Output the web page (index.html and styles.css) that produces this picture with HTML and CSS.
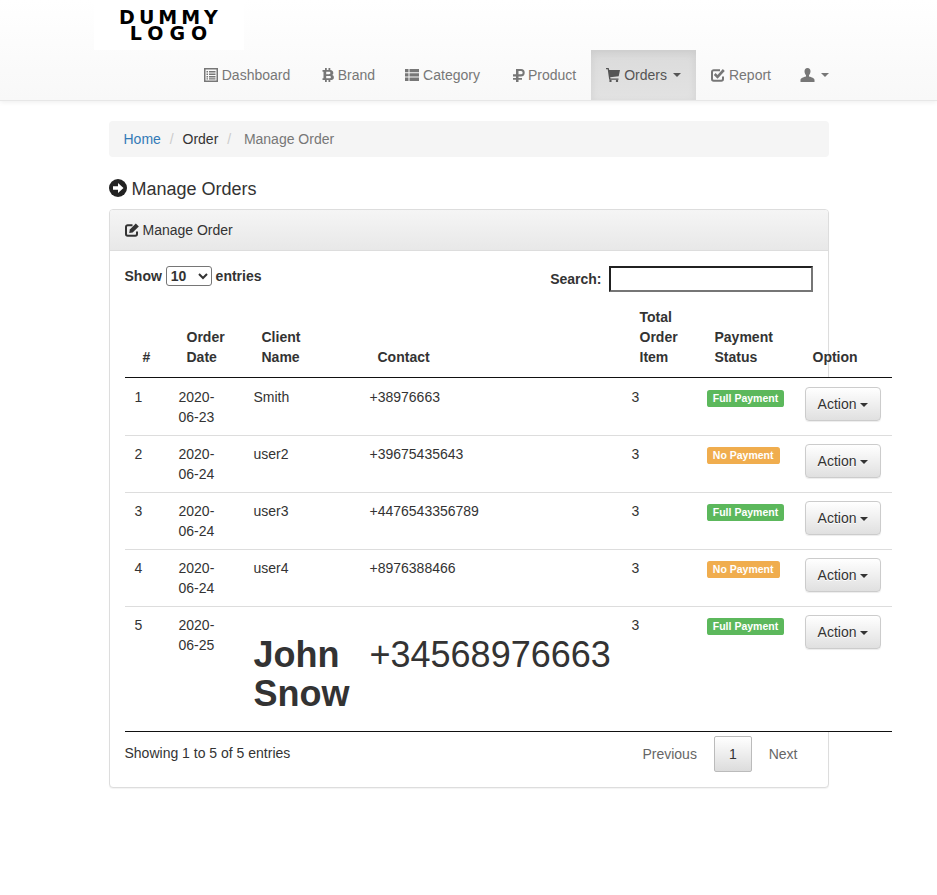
FILE: index.html
```html
<!DOCTYPE html>
<html lang="en">
<head>
<meta charset="utf-8">
<title>Manage Orders</title>
<link rel="stylesheet" href="styles.css">
</head>
<body>
<header class="navbar">
  <div class="nav-inner">
    <div class="logo"><span class="logo-a">DUMMY</span><span class="logo-b">LOGO</span></div>
    <ul class="nav">
      <li><a href="#"><svg class="ico" viewBox="0 0 14 14"><path fill-rule="evenodd" d="M0 0h14v14H0zM1.500 1.500v11h11v-11z"/><path d="M2.500 3h1.500v1.500H2.500zM5 3h6.500v1.500H5zM2.500 5.500h1.500V7H2.500zM5 5.500h6.500V7H5zM2.500 8h1.500v1.500H2.500zM5 8h6.500v1.500H5zM5 10.200h6.500v1.300H5zM2.500 10.200h1.500v1.300H2.500z"/></svg>Dashboard</a></li>
      <li class="gap-b"><a href="#"><svg class="ico" viewBox="0 0 14 14"><path fill-rule="evenodd" d="M1.500 2H4V0h1.800v2h1.700V0h1.800v2.100c2 .3 3 1.400 3 2.900 0 1-.5 1.700-1.300 2 1.200.3 1.900 1.200 1.900 2.500 0 1.900-1.400 2.500-3.600 2.500V14H7.500v-2H5.800v2H4v-2H1.500v-1.800h1V3.800h-1zM5.200 3.800v2.400H8c.9 0 1.400-.5 1.400-1.200S8.900 3.800 8 3.800zM5.200 8v2.300h3.200c1 0 1.500-.5 1.500-1.150S9.400 8 8.400 8z"/></svg>Brand</a></li>
      <li class="gap-c"><a href="#"><svg class="ico" viewBox="0 0 14 14"><path d="M0 1h3.500v3.300H0zM4.500 1H14v3.300H4.500zM0 5.300h3.500v3.300H0zM4.500 5.300H14v3.300H4.500zM0 9.600h3.500v3.300H0zM4.500 9.600H14v3.300H4.500z"/></svg>Category</a></li>
      <li class="gap-p"><a href="#"><svg class="ico ico-r" viewBox="0 0 14 14"><path fill-rule="evenodd" d="M4 1h5a3.700 3.700 0 0 1 0 7.400H6.500V10H10v1.800H6.500V14H4v-2.200H1V10h3V8.400H1V6.300h3zM6.500 3v3.300H9a1.650 1.650 0 0 0 0-3.300z"/></svg>Product</a></li>
      <li class="active"><a href="#"><svg class="ico" viewBox="0 0 14 14"><path d="M0 0h2.700l.5 2H14l-1.300 6.300-8.500 1 .3 1.200h8v1.200H3.200L1.700 1.200H0z"/><circle cx="4.500" cy="13" r="1.200"/><circle cx="11" cy="13" r="1.200"/></svg>Orders<i class="caret"></i></a></li>
      <li><a href="#"><svg class="ico" viewBox="0 0 14 14"><path class="st" stroke-width="2" d="M12 8.500V11a1.700 1.700 0 0 1-1.700 1.700H2.700A1.700 1.700 0 0 1 1 11V4a1.700 1.700 0 0 1 1.700-1.700H9"/><path class="st" stroke-width="2.600" d="M3.700 6l2.800 2.800L12.800 2"/></svg>Report</a></li>
      <li class="user"><a href="#"><svg class="ico ico-u" viewBox="1 0 14 14"><path d="M8 0c2 0 3 1.300 3 3.300 0 1.700-.8 3.200-1.500 3.900v1.300c2.500.8 5.500 1.300 5.500 3.500v2H1v-2c0-2.200 3-2.700 5.500-3.500V7.200C5.800 6.500 5 5 5 3.300 5 1.300 6 0 8 0z"/></svg><i class="caret"></i></a></li>
    </ul>
  </div>
</header>

<main class="container">
  <ol class="breadcrumb">
    <li><a href="#">Home</a></li>
    <li>Order</li>
    <li class="current">&nbsp;Manage Order</li>
  </ol>

  <h4 class="page-title"><svg class="title-ico" viewBox="0 0 18 18"><circle cx="9" cy="9" r="9"/><path class="arrow" d="M4 7.300h5V4L14.500 9 9 14v-3.300H4z"/></svg>Manage Orders</h4>

  <section class="panel">
    <div class="panel-head"><svg class="ico head-ico" viewBox="0 0 14 14"><path class="st" stroke-width="2" d="M12 8.500V11a1.700 1.700 0 0 1-1.700 1.700H2.700A1.700 1.700 0 0 1 1 11V4a1.700 1.700 0 0 1 1.700-1.700H7.500"/><path d="M4.800 6.500L10.800.4 13.800 3.400 7.700 9.400 4.200 10z"/></svg>Manage Order</div>
    <div class="panel-body">
      <div class="tools">
        <label class="length">Show <select><option>10</option><option>25</option><option>50</option></select> entries</label>
        <label class="search">Search: <input type="search"></label>
      </div>
      <table class="orders">
        <colgroup>
          <col class="c1"><col class="c2"><col class="c3"><col class="c4"><col class="c5"><col class="c6"><col class="c7">
        </colgroup>
        <thead>
          <tr>
            <th class="hash">#</th>
            <th>Order Date</th>
            <th>Client Name</th>
            <th>Contact</th>
            <th>Total Order Item</th>
            <th>Payment Status</th>
            <th>Option</th>
          </tr>
        </thead>
        <tbody>
          <tr>
            <td>1</td><td>2020-06-23</td><td>Smith</td><td>+38976663</td><td>3</td>
            <td><span class="label ok">Full Payment</span></td>
            <td><button class="btn">Action <i class="caret"></i></button></td>
          </tr>
          <tr>
            <td>2</td><td>2020-06-24</td><td>user2</td><td>+39675435643</td><td>3</td>
            <td><span class="label warn">No Payment</span></td>
            <td><button class="btn">Action <i class="caret"></i></button></td>
          </tr>
          <tr>
            <td>3</td><td>2020-06-24</td><td>user3</td><td>+4476543356789</td><td>3</td>
            <td><span class="label ok">Full Payment</span></td>
            <td><button class="btn">Action <i class="caret"></i></button></td>
          </tr>
          <tr>
            <td>4</td><td>2020-06-24</td><td>user4</td><td>+8976388466</td><td>3</td>
            <td><span class="label warn">No Payment</span></td>
            <td><button class="btn">Action <i class="caret"></i></button></td>
          </tr>
          <tr>
            <td>5</td><td>2020-06-25</td><td><h1 class="big">John Snow</h1></td><td><h1 class="big thin">+34568976663</h1></td><td>3</td>
            <td><span class="label ok">Full Payment</span></td>
            <td><button class="btn">Action <i class="caret"></i></button></td>
          </tr>
        </tbody>
      </table>
      <div class="table-foot">
        <div class="info">Showing 1 to 5 of 5 entries</div>
        <div class="pager"><a href="#">Previous</a><a href="#" class="on">1</a><a href="#">Next</a></div>
      </div>
    </div>
  </section>
</main>
</body>
</html>
```
FILE: styles.css
```css
* { box-sizing: border-box; }
html, body { margin: 0; padding: 0; }
body {
  font-family: "Liberation Sans", Arial, sans-serif;
  font-size: 14px;
  line-height: 20px;
  color: #333;
  background: #fff;
  min-height: 895px;
}
a { text-decoration: none; }

.navbar {
  height: 101px;
  background: linear-gradient(to bottom, #fff 0, #f8f8f8 100%);
  border-bottom: 1px solid #e7e7e7;
  box-shadow: 0 1px 5px rgba(0,0,0,.075);
}
.nav-inner { width: 750px; margin: 0 auto; }
.logo {
  width: 150px;
  height: 50px;
  background: #fff;
  display: flex;
  flex-direction: column;
  align-items: center;
  padding-top: 9px;
  font-family: "DejaVu Sans", sans-serif;
  font-weight: bold;
  font-size: 19px;
  line-height: 16px;
  color: #000;
}
.logo-a { letter-spacing: 4px; margin-left: 4px; }
.logo-b { letter-spacing: 6px; margin-left: 6px; }
.nav {
  list-style: none;
  margin: 0 -0.5px 0 0;
  padding: 0;
  display: flex;
  justify-content: flex-end;
  height: 50px;
}
.nav a {
  display: flex;
  align-items: center;
  height: 50px;
  padding: 0 15px;
  color: #777;
}
.ico { width: 14px; height: 14px; margin-right: 4px; fill: currentColor; flex: none; }
.ico-r { margin-right: 2px; }
.ico-u { width: 15px; margin-right: 6px; }
.user a { padding-left: 14px; }
.st { fill: none; stroke: currentColor; }
.gap-b { margin-left: .5px; }
.gap-b .ico { margin-right: 3px; }
.gap-p { margin-left: 2px; }
.active a {
  color: #555;
  background: linear-gradient(to bottom, #dbdbdb 0, #e2e2e2 100%);
  box-shadow: inset 0 3px 9px rgba(0,0,0,.075);
}
.caret {
  display: inline-block;
  width: 0;
  height: 0;
  border-top: 4px solid currentColor;
  border-left: 4px solid transparent;
  border-right: 4px solid transparent;
  vertical-align: middle;
}
.active .caret { margin-left: 6px; }

.container { width: 750px; margin: 0 auto; padding: 0 15px; }
.breadcrumb {
  list-style: none;
  margin: 20px 0 0;
  padding: 8px 15px;
  background: #f5f5f5;
  border-radius: 4px;
}
.breadcrumb li { display: inline-block; }
.breadcrumb li + li::before { content: "/\00a0"; padding: 0 5px; color: #ccc; }
.breadcrumb a { color: #337ab7; }
.breadcrumb .current { color: #777; }

.page-title {
  display: flex;
  align-items: center;
  margin: 22px 0 10px;
  font-size: 18px;
  font-weight: 500;
  line-height: 20px;
  color: #333;
}
.title-ico { width: 18px; height: 18px; margin-right: 5px; fill: #222; margin-top: -3px; }
.title-ico .arrow { fill: #fff; }

.panel {
  background: #fff;
  border: 1px solid #ddd;
  border-radius: 4px;
  box-shadow: 0 1px 1px rgba(0,0,0,.05);
}
.panel-head {
  display: flex;
  align-items: center;
  height: 41px;
  padding: 0 15px;
  background: linear-gradient(to bottom, #f5f5f5 0, #e8e8e8 100%);
  border-bottom: 1px solid #ddd;
  border-radius: 3px 3px 0 0;
}
.head-ico { color: #333; }
.panel-body { padding: 15px; }

.tools { display: flex; justify-content: space-between; height: 31px; font-weight: bold; }
.length select {
  width: 46px;
  height: 20px;
  font: bold 14px "Liberation Sans", Arial, sans-serif;
  color: #333;
  background: #fff;
  border: 1px solid #767676;
  border-radius: 3px;
}
.search { padding-top: 3px; display: flex; align-items: flex-start; gap: 7px; line-height: 20px; }
.search input {
  width: 204px;
  height: 26px;
  margin-top: -3px;
  padding: 1px 2px;
  border: 2px inset #767676;
  background: #fff;
}
.length { display: block; line-height: 20px; }

.orders {
  width: 767px;
  table-layout: fixed;
  border-collapse: separate;
  border-spacing: 0;
  border-bottom: 1px solid #111;
}
.c1 { width: 44px; }
.c2 { width: 75px; }
.c3 { width: 116px; }
.c4 { width: 262px; }
.c5 { width: 75px; }
.c6 { width: 98px; }
.c7 { width: 97px; }
.orders th {
  padding: 10px 18px;
  text-align: left;
  vertical-align: bottom;
  font-weight: bold;
  border-bottom: 1px solid #111;
}
.orders th.hash { padding-left: 18px; padding-right: 0; }
.orders tbody tr { background: #fff; }
.orders td {
  padding: 8px 10px;
  vertical-align: top;
  border-top: 1px solid #ddd;
}
.orders tbody tr:first-child td { border-top-color: #fff; }
.big {
  margin: 20px 0 10px;
  font-size: 36px;
  line-height: 39px;
  font-weight: 700;
  color: #333;
}
.thin { font-weight: 400; }

.label {
  display: inline;
  padding: .2em .6em .3em;
  font-size: 10.500px;
  font-weight: bold;
  line-height: 1;
  color: #fff;
  white-space: nowrap;
  vertical-align: baseline;
  border-radius: .25em;
}
.ok { background: #5cb85c; }
.warn { background: #f0ad4e; }

.btn {
  display: block;
  width: 76px;
  height: 34px;
  padding: 6px 0 6px 1px;
  font: 14px/20px "Liberation Sans", Arial, sans-serif;
  color: #333;
  text-align: center;
  white-space: nowrap;
  text-shadow: 0 1px 0 #fff;
  background: linear-gradient(to bottom, #fff 0, #e0e0e0 100%);
  border: 1px solid #ccc;
  border-radius: 4px;
  box-shadow: inset 0 1px 0 rgba(255,255,255,.15), 0 1px 1px rgba(0,0,0,.075);
}

.table-foot {
  display: flex;
  justify-content: space-between;
  align-items: flex-start;
}
.info { padding-top: 11px; }
.pager { display: flex; padding-top: 4px; }
.pager a {
  display: block;
  height: 36px;
  margin-left: 2px;
  padding: 7px 14px;
  line-height: 20px;
  color: #666;
  border: 1px solid transparent;
  border-radius: 2px;
}
.pager .on {
  color: #333;
  background: linear-gradient(to bottom, #fff 0, #dcdcdc 100%);
  border-color: #bbb;
}
```
